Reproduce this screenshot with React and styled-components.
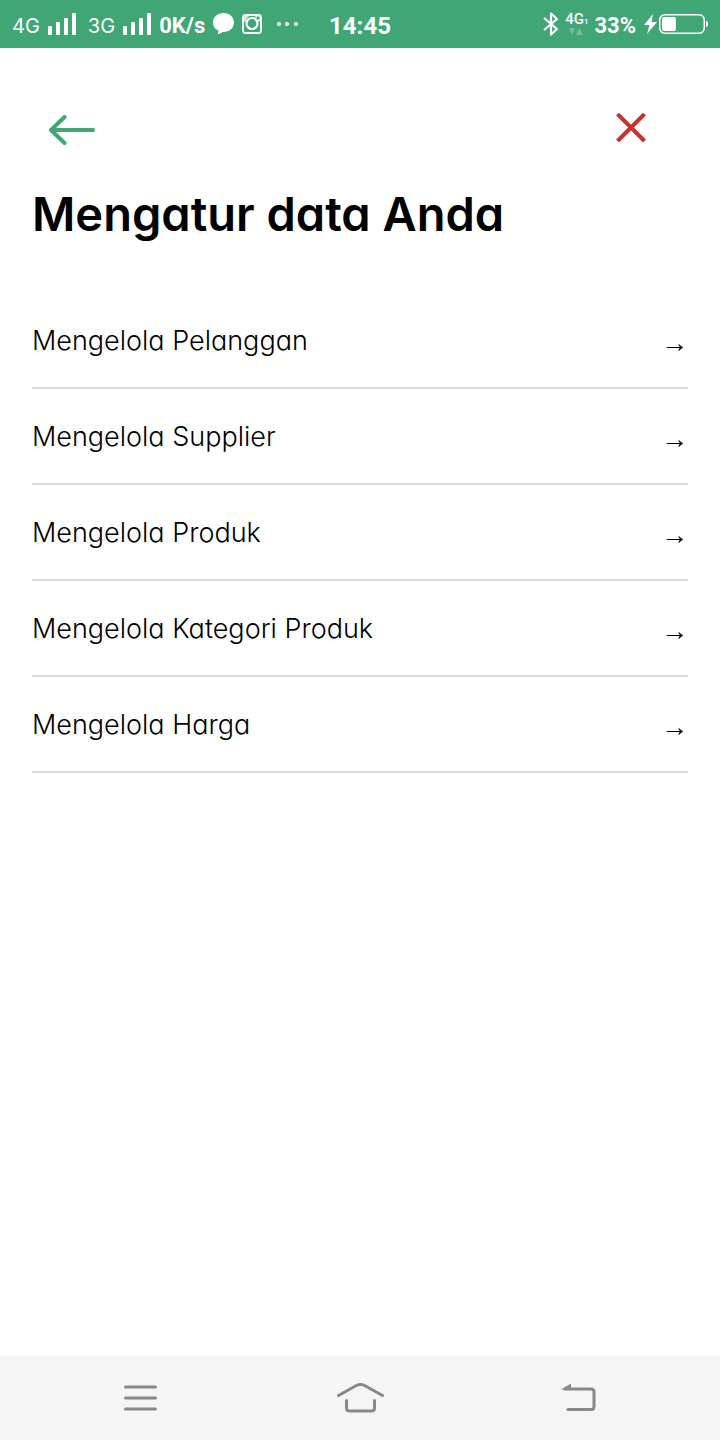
import React from "react";
import styled, { createGlobalStyle } from "styled-components";

const GlobalStyle = createGlobalStyle`
  *, *::before, *::after { box-sizing: border-box; }
  body {
    margin: 0;
    background: #fff;
    color: #000;
    font-family: Inter, "Liberation Sans", sans-serif;
  }
`;

const Screen = styled.div`
  display: flex;
  flex-direction: column;
  min-height: 100vh;
`;

const StatusBar = styled.header`
  display: grid;
  grid-template-columns: 1fr auto 1fr;
  align-items: center;
  height: 48px;
  padding: 0 12px;
  background: #40a676;
  color: #fff;
`;

const StatusGroup = styled.div`
  display: flex;
  align-items: center;
  gap: ${(p) => (p.$end ? 6 : 8)}px;
  justify-content: ${(p) => (p.$end ? "flex-end" : "flex-start")};
`;

const StatusText = styled.span`
  font-family: Roboto, sans-serif;
  font-size: ${(p) => p.$size || 22}px;
  font-weight: 700;
  line-height: 28px;
  padding-top: 4px;
  white-space: nowrap;
`;

const Signal = styled.span`
  display: flex;
  align-items: center;
  gap: 8px;
  margin-right: ${(p) => (p.$wide ? 4 : 0)}px;
  font-size: 20px;
  line-height: 28px;

  span { padding-top: 4px; }
`;

const NetworkBadge = styled.span`
  display: flex;
  flex-direction: column;
  gap: 2px;
  font-family: Roboto, sans-serif;
  font-size: 15px;
  font-weight: 500;
  line-height: 14px;

  small { font-size: 8px; line-height: 8px; }
  svg { margin: 0 4px; }
`;

const PowerGroup = styled.span`
  display: flex;
  align-items: center;
  gap: 2px;
  margin-left: 2px;
`;

const Icon = styled.svg`
  display: block;
  flex: none;
`;

const Main = styled.main`
  flex: 1;
  padding: 55px 32px;
`;

const Toolbar = styled.nav`
  display: flex;
  justify-content: space-between;
  align-items: center;
  padding: 0 32px 0 8px;
`;

const IconButton = styled.button`
  display: flex;
  align-items: center;
  justify-content: center;
  width: ${(p) => p.$width || 50}px;
  height: 50px;
  padding: 0;
  border: 0;
  background: none;
  color: ${(p) => p.$color};
  cursor: pointer;
`;

const Title = styled.h1`
  margin: 30px 0 49px;
  font-size: 47px;
  font-weight: 600;
  line-height: 61px;
  font-feature-settings: "cv11";
`;

const Menu = styled.ul`
  margin: 0;
  padding: 0;
  list-style: none;
`;

const MenuLink = styled.a`
  display: flex;
  align-items: center;
  justify-content: space-between;
  height: 96px;
  border-bottom: 2px solid #dcdcdc;
  color: #000;
  font-size: 27px;
  font-weight: 300;
  font-feature-settings: "cv11";
  text-decoration: none;
`;

const Arrow = styled.span`
  padding-top: 6px;
  font-family: "Liberation Sans", sans-serif;
  font-size: 27px;
  font-weight: 400;
`;

const NavBar = styled.nav`
  display: flex;
  justify-content: space-between;
  align-items: center;
  height: 84px;
  padding: 0 116px;
  background: #f5f5f5;
`;

const items = [
  "Mengelola Pelanggan",
  "Mengelola Supplier",
  "Mengelola Produk",
  "Mengelola Kategori Produk",
  "Mengelola Harga",
];

function Bars() {
  return (
    <Icon width="28" height="22" fill="currentColor" aria-hidden="true">
      <rect x="0" y="13" width="4" height="9" rx="1" />
      <rect x="8" y="9" width="4" height="13" rx="1" />
      <rect x="16" y="5" width="4" height="17" rx="1" />
      <rect x="24" y="0" width="4" height="22" rx="1" />
    </Icon>
  );
}

function Status() {
  return (
    <StatusBar>
      <StatusGroup>
        <Signal $wide><span>4G</span><Bars /></Signal>
        <Signal><span>3G</span><Bars /></Signal>
        <StatusText>0K/s</StatusText>
        <Icon width="21" height="22" fill="currentColor" aria-hidden="true">
          <path d="M10.5 0C16.500 0 21 4 21 9.500s-4.500 9.500-10.500 9.500H9.500C8 20.500 6.500 21 4.500 21c.8-1 1.100-2 1-3.500C2 16 0 13.500 0 9.500 0 4 4.500 0 10.500 0Z" />
        </Icon>
        <Icon width="20" height="20" fill="none" stroke="currentColor" aria-hidden="true">
          <rect x="1" y="1" width="18" height="18" rx="2.5" strokeWidth="1.8" />
          <path d="M1 2h13v4h5v1.500h-3A6 6 0 0 0 4 7.500H1Z" fill="currentColor" stroke="none" opacity=".75" />
          <circle cx="10" cy="9.5" r="5.5" fill="#40a676" strokeWidth="2.2" />
          <rect x="14" y="2" width="4" height="4" rx="1" fill="#40a676" strokeWidth="1" />
        </Icon>
        <Icon width="36" height="4" fill="currentColor" aria-hidden="true">
          <circle cx="9" cy="2" r="2" />
          <circle cx="17" cy="2" r="2" />
          <circle cx="26" cy="2" r="2" />
        </Icon>
      </StatusGroup>
      <StatusText as="time" $size={24}>14:45</StatusText>
      <StatusGroup $end>
        <Icon width="16" height="24" fill="none" stroke="currentColor" strokeWidth="2.2" strokeLinejoin="round" role="img" aria-label="Bluetooth">
          <path d="M1 6 14 17 8 22.500V1.500L14 7 1 18" />
        </Icon>
        <NetworkBadge>
          <span>4G<small>1</small></span>
          <Icon width="14" height="8" fill="#8fcbaf" aria-hidden="true">
            <path d="M0 0h6L3 7Z" opacity=".65" />
            <path d="M7 7h7l-3.500-7Z" opacity=".65" />
          </Icon>
        </NetworkBadge>
        <StatusText>33%</StatusText>
        <PowerGroup>
          <Icon width="13" height="20" fill="currentColor" aria-hidden="true">
            <path d="M9 0 0 11h5.500L3 20 13 8H7.500Z" />
          </Icon>
          <Icon width="49" height="20" aria-hidden="true">
            <rect x="0.75" y="0.75" width="44.5" height="18.5" rx="5" fill="none" stroke="currentColor" strokeWidth="1.5" />
            <rect x="3" y="3" width="14" height="14" rx="2" fill="currentColor" />
            <path d="M47 7q2 0 2 3t-2 3Z" fill="currentColor" />
          </Icon>
        </PowerGroup>
      </StatusGroup>
    </StatusBar>
  );
}

export default function App() {
  return (
    <Screen>
      <GlobalStyle />
      <Status />
      <Main>
        <Toolbar>
          <IconButton $color="#40a676" $width={64} aria-label="Kembali">
            <Icon width="46" height="36" fill="none" stroke="currentColor" strokeWidth="4" strokeLinecap="round" strokeLinejoin="round">
              <path d="M44 20H2M15.500 7 2 20l13.500 13" />
            </Icon>
          </IconButton>
          <IconButton $color="#c73232" aria-label="Tutup">
            <Icon width="30" height="30" fill="none" stroke="currentColor" strokeWidth="4">
              <path d="m1.500 1 27 27M28.500 1l-27 27" />
            </Icon>
          </IconButton>
        </Toolbar>
        <Title>Mengatur data Anda</Title>
        <Menu>
          {items.map((label) => (
            <li key={label}>
              <MenuLink href="#">
                {label}
                <Arrow aria-hidden="true">→</Arrow>
              </MenuLink>
            </li>
          ))}
        </Menu>
      </Main>
      <NavBar aria-label="Navigasi sistem">
        <IconButton $color="#888" aria-label="Menu">
          <Icon width="34" height="26" fill="none" stroke="currentColor" strokeWidth="3" strokeLinecap="round">
            <path d="M1.500 2h30M1.500 13h30M1.500 24h30" />
          </Icon>
        </IconButton>
        <IconButton $color="#888" aria-label="Beranda">
          <Icon width="48" height="30" fill="none" stroke="currentColor" strokeWidth="3" strokeLinecap="round" strokeLinejoin="round">
            <path d="M2.500 12.500 19.500 3q5-3 10 0l17 9.500M10.500 17.500v7.500q0 3 3 3h22q3 0 3-3V17.500" />
          </Icon>
        </IconButton>
        <IconButton $color="#888" aria-label="Kembali ke layar sebelumnya">
          <Icon width="36" height="30" fill="none" stroke="currentColor" strokeWidth="3" strokeLinecap="round" strokeLinejoin="round">
            <path d="M4 6h26q3 0 3 3v14.500q0 3-3 3H7" />
            <path d="M0 6.500 10 0.500v6Z" fill="currentColor" stroke="none" />
          </Icon>
        </IconButton>
      </NavBar>
    </Screen>
  );
}
